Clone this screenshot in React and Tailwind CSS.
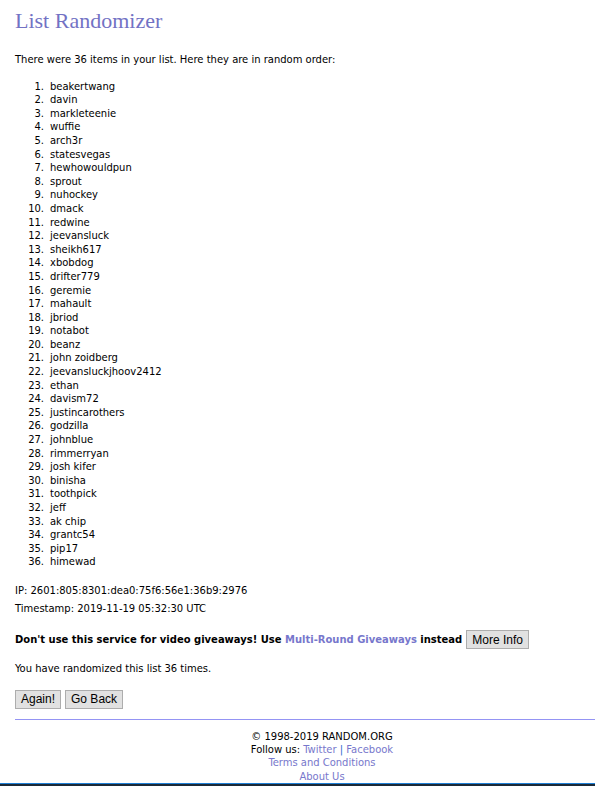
import React from 'react';

const items = [
  'beakertwang', 'davin', 'markleteenie', 'wuffie', 'arch3r', 'statesvegas',
  'hewhowouldpun', 'sprout', 'nuhockey', 'dmack', 'redwine', 'jeevansluck',
  'sheikh617', 'xbobdog', 'drifter779', 'geremie', 'mahault', 'jbriod',
  'notabot', 'beanz', 'john zoidberg', 'jeevansluckjhoov2412', 'ethan', 'davism72',
  'justincarothers', 'godzilla', 'johnblue', 'rimmerryan', 'josh kifer', 'binisha',
  'toothpick', 'jeff', 'ak chip', 'grantc54', 'pip17', 'himewad',
];

const Btn = ({ children }) => (
  <button className="h-[19px] px-[5px] bg-[#e1e1e1] border border-[#adadad] text-[12px] leading-none text-black font-normal font-['Liberation_Sans',Arial,sans-serif]">
    {children}
  </button>
);

export default function App() {
  return (
    <div className="bg-white min-h-[787px] text-black font-['DejaVu_Sans_Condensed','DejaVu_Sans',sans-serif] text-[11.1px] leading-[13.6px]">
      <div className="pl-[15px]">
        <h1 className="pt-[8px] text-[22px] leading-[26px] text-[#7272c4] font-['Times_New_Roman','Liberation_Serif',serif] font-normal">
          List Randomizer
        </h1>

        <p className="mt-[19px]">There were 36 items in your list. Here they are in random order:</p>

        <ol className="mt-[13px]">
          {items.map((name, i) => (
            <li key={i} className="flex">
              <span className="w-[35px] text-right pr-[6px]">{i + 1}.</span>
              <span>{name}</span>
            </li>
          ))}
        </ol>

        <p className="mt-[15px]">IP: 2601:805:8301:dea0:75f6:56e1:36b9:2976</p>
        <p className="mt-[4px]">Timestamp: 2019-11-19 05:32:30 UTC</p>

        <div className="mt-[15px] flex items-center gap-[4px] font-bold">
          <span>
            Don't use this service for video giveaways! Use{' '}
            <a className="text-[#7777cc]">Multi-Round Giveaways</a> instead
          </span>
          <Btn>More Info</Btn>
        </div>

        <p className="mt-[13px]">You have randomized this list 36 times.</p>

        <div className="mt-[14px] flex gap-[4px]">
          <Btn>Again!</Btn>
          <Btn>Go Back</Btn>
        </div>

        <div className="mt-[10px] h-px bg-[#9494f4]" />

        <div className="pt-[10px] pl-[34px] text-center leading-[13.3px]">
          <div>© 1998-2019 RANDOM.ORG</div>
          <div>
            Follow us: <a className="text-[#7777cc]">Twitter</a> <span className="text-[#2a6ad0]">|</span>{' '}
            <a className="text-[#7777cc]">Facebook</a>
          </div>
          <div className="text-[#7777cc]">Terms and Conditions</div>
          <div className="text-[#7777cc]">About Us</div>
        </div>
      </div>
      <div className="h-px bg-[#1e7fd6]" />
      <div className="h-[2px] bg-[#1b2a38]" />
    </div>
  );
}
